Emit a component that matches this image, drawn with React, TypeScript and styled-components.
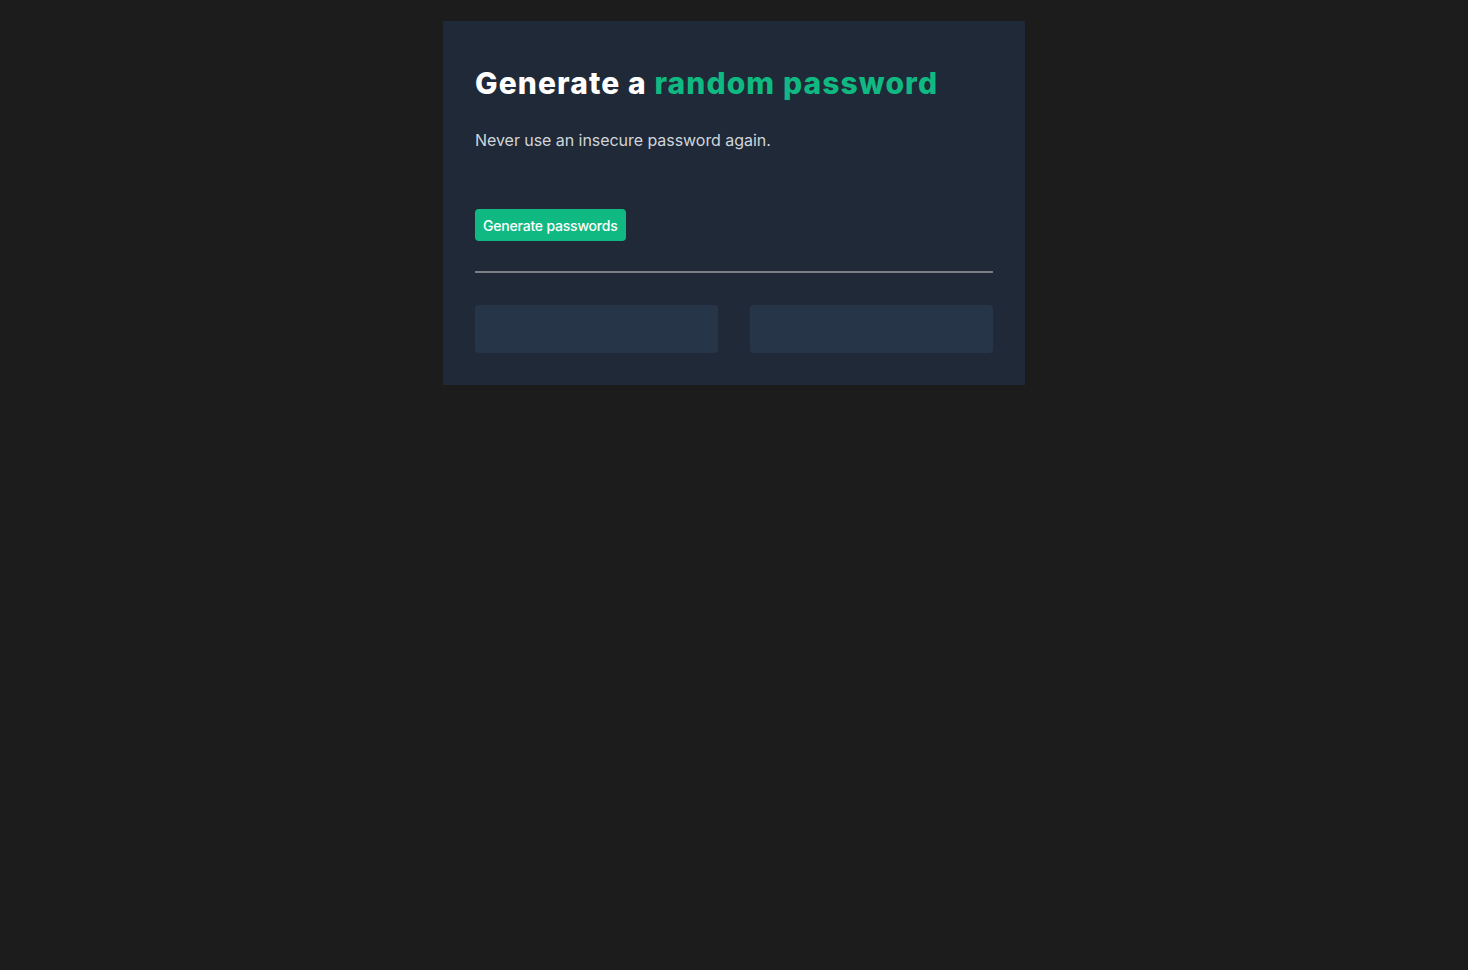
import React from "react";
import styled, { createGlobalStyle } from "styled-components";

const Global = createGlobalStyle`
  html, body { margin: 0; padding: 0; background: #1c1c1c; }
  body { font-family: Inter, "Noto Sans", sans-serif; min-height: 970px; }
`;

const Page = styled.main`
  display: flex;
  justify-content: center;
  padding-top: 21px;
`;

const Card = styled.section`
  width: 582px;
  box-sizing: border-box;
  background: #1f2937;
  padding: 44px 32px 32px;
  display: flex;
  flex-direction: column;
`;

const Title = styled.h1`
  margin: 0;
  font-family: Inter, sans-serif;
  font-weight: 800;
  font-size: 30px;
  line-height: 36px;
  letter-spacing: 1.1px;
  color: #ffffff;
`;

const Accent = styled.span`
  color: #10b981;
`;

const Subtitle = styled.p`
  margin: 27px 0 0;
  font-size: 16px;
  line-height: 24px;
  letter-spacing: -0.05px;
  color: #d1d5db;
`;

const Button = styled.button`
  align-self: flex-start;
  margin-top: 57px;
  height: 32px;
  padding: 0 8px;
  border: none;
  border-radius: 4px;
  background: #10b981;
  color: #ffffff;
  font-family: Inter, sans-serif;
  font-weight: 500;
  font-size: 14px;
  letter-spacing: -0.2px;
  cursor: pointer;
`;

const Divider = styled.hr`
  margin: 30px 0 0;
  border: none;
  height: 2px;
  background: #7a7d82;
`;

const Results = styled.div`
  margin-top: 32px;
  display: grid;
  grid-template-columns: 1fr 1fr;
  gap: 32px;
`;

const Slot = styled.div`
  height: 48px;
  border-radius: 4px;
  background: #273549;
`;

export default function App() {
  return (
    <>
      <Global />
      <Page>
        <Card>
          <Title>
            Generate a <Accent>random password</Accent>
          </Title>
          <Subtitle>Never use an insecure password again.</Subtitle>
          <Button>Generate passwords</Button>
          <Divider />
          <Results>
            <Slot />
            <Slot />
          </Results>
        </Card>
      </Page>
    </>
  );
}
